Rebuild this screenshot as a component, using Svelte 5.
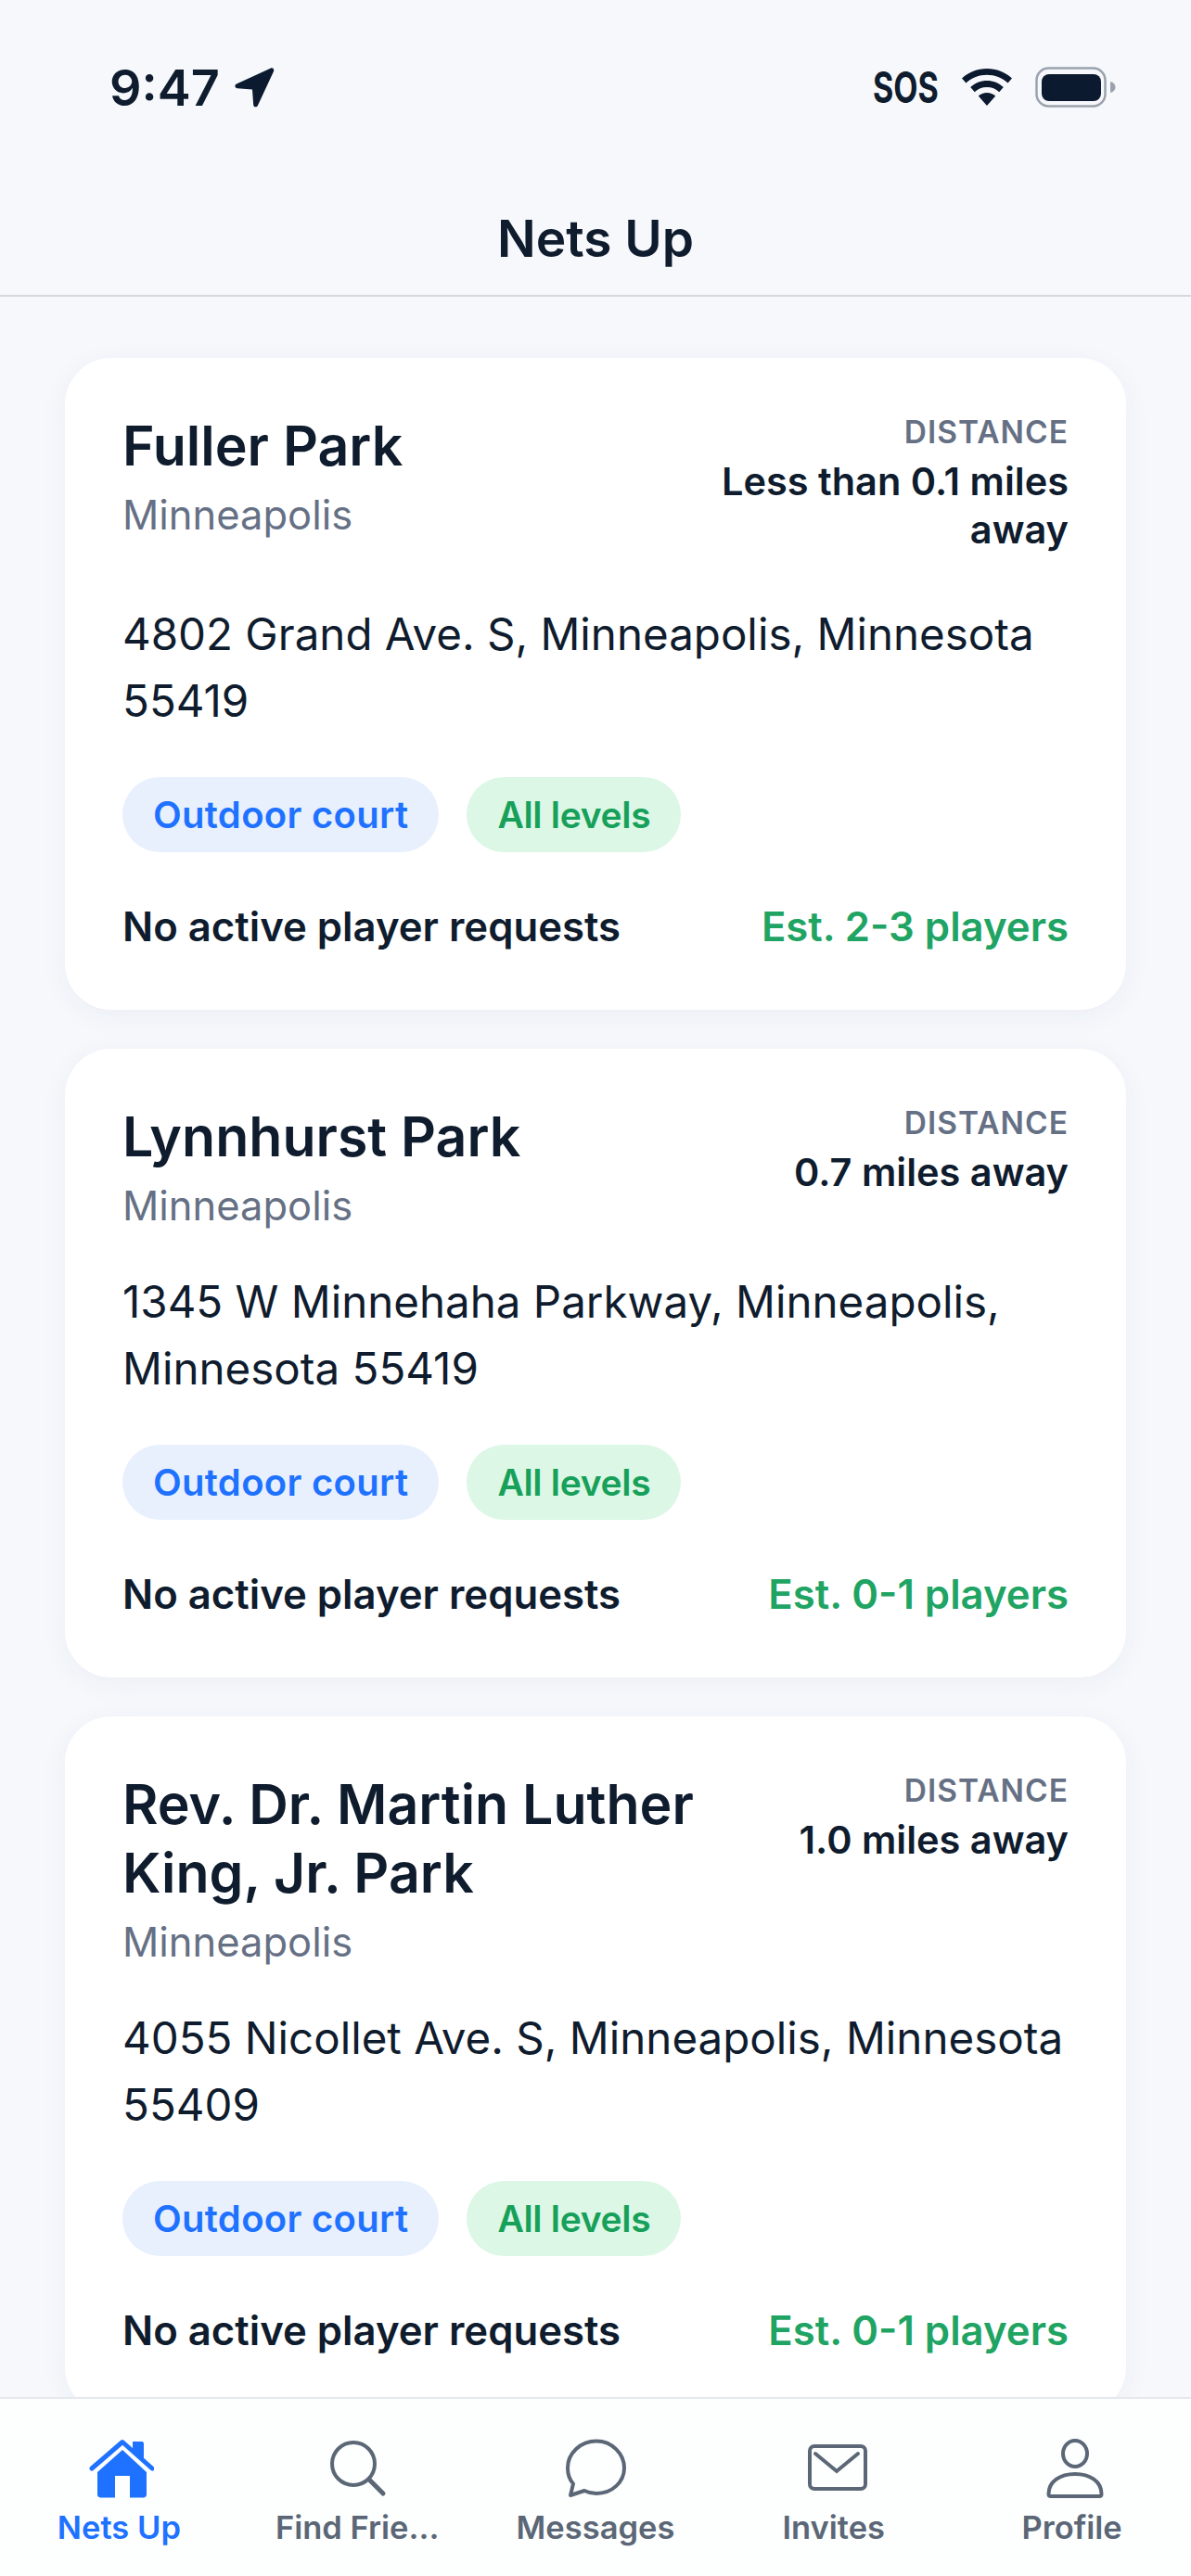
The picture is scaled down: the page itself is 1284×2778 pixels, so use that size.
<script>
  const parks = [
    { name: 'Fuller Park', distance: 'Less than 0.1 miles away', address: '4802 Grand Ave. S, Minneapolis, Minnesota 55419', players: 'Est. 2-3 players' },
    { name: 'Lynnhurst Park', distance: '0.7 miles away', address: '1345 W Minnehaha Parkway, Minneapolis, Minnesota 55419', players: 'Est. 0-1 players' },
    { name: 'Rev. Dr. Martin Luther King, Jr. Park', distance: '1.0 miles away', address: '4055 Nicollet Ave. S, Minneapolis, Minnesota 55409', players: 'Est. 0-1 players' }
  ];
  const tabs = ['Nets Up', 'Find Frie...', 'Messages', 'Invites', 'Profile'];
</script>

<div class="screen">
  <header>
    <div class="status">
      <div class="time">
        <span>9:47</span>
        <svg width="44" height="44" viewBox="0 0 44 44"><path d="M40 1.500 3 18.500c-2.500 1.200-2 4.500.8 4.800L20 24.500l1.200 16.500c.2 2.800 3.600 3.200 4.700.7L43 5c.9-2.300-.8-4.400-3-3.500z" fill="#0b1a2e"/></svg>
      </div>
      <div class="indicators">
        <span class="sos">SOS</span>
        <svg class="wifi" width="56" height="40" viewBox="0 0 56 40"><path d="M28 0C17.500 0 8.500 3.800 1 10.500l4.500 5C11.500 10 19.500 6.800 28 6.800S44.500 10 50.500 15.500l4.500-5C47.500 3.800 38.500 0 28 0zM28 13c-6.800 0-12.800 2.500-17.800 7l4.600 5.200c3.500-3.200 8-5.100 13.200-5.100s9.700 1.900 13.200 5.100l4.600-5.200c-5-4.500-11-7-17.800-7zM28 26c-3.500 0-6.700 1.300-9.200 3.600L28 40l9.200-10.400C34.700 27.300 31.500 26 28 26z" fill="#0b1a2e"/></svg>
        <svg width="88" height="44" viewBox="0 0 88 44"><rect x="1.500" y="1.500" width="74" height="41" rx="13" fill="none" stroke="#9aa2ad" stroke-width="2.500"/><rect x="7" y="8" width="64" height="29" rx="8" fill="#0b1a2e"/><path d="M81 16c3.500.8 5.500 3 5.500 6s-2 5.200-5.500 6z" fill="#9aa2ad"/></svg>
      </div>
    </div>
    <h1>Nets Up</h1>
  </header>

  <main>
    {#each parks as park}
      <article>
        <div class="top">
          <div class="place">
            <h2>{park.name}</h2>
            <p class="city">Minneapolis</p>
          </div>
          <div class="distance">
            <p class="label">DISTANCE</p>
            <p class="value">{park.distance}</p>
          </div>
        </div>
        <p class="address">{park.address}</p>
        <div class="tags">
          <span class="tag blue">Outdoor court</span>
          <span class="tag green">All levels</span>
        </div>
        <div class="foot">
          <span>No active player requests</span>
          <span class="players">{park.players}</span>
        </div>
      </article>
    {/each}
  </main>

  <nav>
    {#each tabs as tab, i}
      <div class="tab" class:active={i === 0}>
        <svg width="76" height="66" viewBox="0 0 76 66">
          {#if i === 0}
            <path d="M9 32 42 3.500 74 32" fill="none" stroke="#1f72ff" stroke-width="5" stroke-linecap="round" stroke-linejoin="round"/>
            <path d="M53 3h10c1 0 2 1 2 2v19L53 13.500z" fill="#1f72ff"/>
            <path d="M42 12 15 36v24c0 2 1.500 3.500 3.500 3.500H34V40h16v23.500h14.500c2 0 3.500-1.500 3.500-3.500V36z" fill="#1f72ff"/>
          {:else if i === 1}
            <circle cx="34" cy="27" r="23" fill="none" stroke="#5b6776" stroke-width="4"/>
            <path d="M51 44 66 59" fill="none" stroke="#5b6776" stroke-width="5" stroke-linecap="round"/>
          {:else if i === 2}
            <path d="M39 2.500C22 2.500 8 15.500 8 31.500c0 6.500 2 12.500 6 17L11 61l15-5c4 2 8.500 3 13 3 17 0 30-12.500 30-27.500S56 2.500 39 2.500z" fill="none" stroke="#5b6776" stroke-width="4" stroke-linejoin="round"/>
          {:else if i === 3}
            <rect x="12" y="8" width="60" height="46" rx="5" fill="none" stroke="#5b6776" stroke-width="4"/>
            <path d="M18 16 41 35 64 16" fill="none" stroke="#5b6776" stroke-width="4" stroke-linecap="round"/>
          {:else}
            <ellipse cx="41" cy="16" rx="13" ry="14" fill="none" stroke="#5b6776" stroke-width="4"/>
            <path d="M15 62c-1.500 0-2.500-1-2.500-2.500C12.500 46 25 38 41 38s28.500 8 28.500 21.500c0 1.500-1 2.500-2.500 2.500z" fill="none" stroke="#5b6776" stroke-width="4" stroke-linejoin="round"/>
          {/if}
        </svg>
        <span>{tab}</span>
      </div>
    {/each}
  </nav>
</div>

<style>
  :global(body) {
    margin: 0;
    background: #f6f8fc;
  }

  .screen {
    height: 2778px;
    display: flex;
    flex-direction: column;
    overflow: hidden;
    font-family: Inter, "Liberation Sans", sans-serif;
    color: #0f1c2e;
    background: #f6f8fc;
  }

  header {
    height: 320px;
    flex-shrink: 0;
    box-sizing: border-box;
    border-bottom: 2px solid #d5d9df;
    padding-top: 66px;
  }

  .status {
    height: 56px;
    padding: 0 80px 0 118px;
    display: flex;
    justify-content: space-between;
    align-items: center;
  }

  .time {
    display: flex;
    align-items: center;
    gap: 15px;
    font-size: 54px;
    font-weight: 600;
  }

  .indicators {
    display: flex;
    align-items: center;
  }

  .sos {
    width: 69px;
    font-size: 46px;
    font-weight: 700;
    transform: scaleX(0.74);
    transform-origin: left center;
    white-space: nowrap;
  }

  .wifi {
    margin: 0 24px 0 26px;
  }

  h1 {
    margin: 101px 0 0;
    font-size: 55px;
    line-height: 68px;
    font-weight: 600;
    text-align: center;
  }

  main {
    flex: 1;
    min-height: 0;
    overflow: hidden;
    padding: 66px 70px 0;
    display: flex;
    flex-direction: column;
    gap: 42px;
  }

  article {
    flex-shrink: 0;
    background: #fff;
    border-radius: 50px;
    padding: 58px 62px 62px;
    box-shadow: 0 6px 30px rgba(30, 50, 90, 0.05);
  }

  .top {
    display: flex;
    justify-content: space-between;
    gap: 30px;
  }

  h2 {
    margin: 0;
    font-size: 59px;
    line-height: 74px;
    font-weight: 600;
  }

  .city {
    margin: 9px 0 0;
    font-size: 43.500px;
    line-height: 56px;
    color: #667085;
  }

  .distance {
    flex-shrink: 0;
    max-width: 400px;
    padding-bottom: 11px;
    text-align: right;
  }

  .label {
    margin: 0 0 5px;
    font-size: 33.500px;
    line-height: 44px;
    font-weight: 600;
    letter-spacing: 1px;
    color: #667085;
  }

  .value {
    margin: 0;
    font-size: 41.500px;
    line-height: 52px;
    font-weight: 600;
  }

  .address {
    margin: 40px 0 0;
    font-size: 47.500px;
    line-height: 72px;
  }

  .tags {
    display: flex;
    gap: 30px;
    margin-top: 46px;
  }

  .tag {
    height: 81px;
    display: flex;
    align-items: center;
    padding: 0 33px;
    border-radius: 41px;
    font-size: 40px;
    font-weight: 600;
  }

  .blue {
    background: #e8f0fe;
    color: #1f72ff;
    letter-spacing: 0.3px;
  }

  .green {
    background: #dcf7e5;
    color: #17a05a;
    font-size: 39px;
    letter-spacing: -0.3px;
  }

  .foot {
    display: flex;
    justify-content: space-between;
    margin-top: 54px;
    font-size: 43.700px;
    line-height: 54px;
    font-weight: 600;
  }

  .players {
    color: #1fa463;
  }

  nav {
    height: 193px;
    flex-shrink: 0;
    box-sizing: border-box;
    border-top: 2px solid #e6e8ef;
    background: #fdfefe;
    padding-top: 43px;
    display: grid;
    grid-template-columns: repeat(5, 1fr);
  }

  .tab {
    display: flex;
    flex-direction: column;
    align-items: center;
    gap: 8px;
    font-size: 34.500px;
    line-height: 44px;
    font-weight: 600;
    color: #5b6776;
  }

  .active {
    color: #1f72ff;
  }
</style>
